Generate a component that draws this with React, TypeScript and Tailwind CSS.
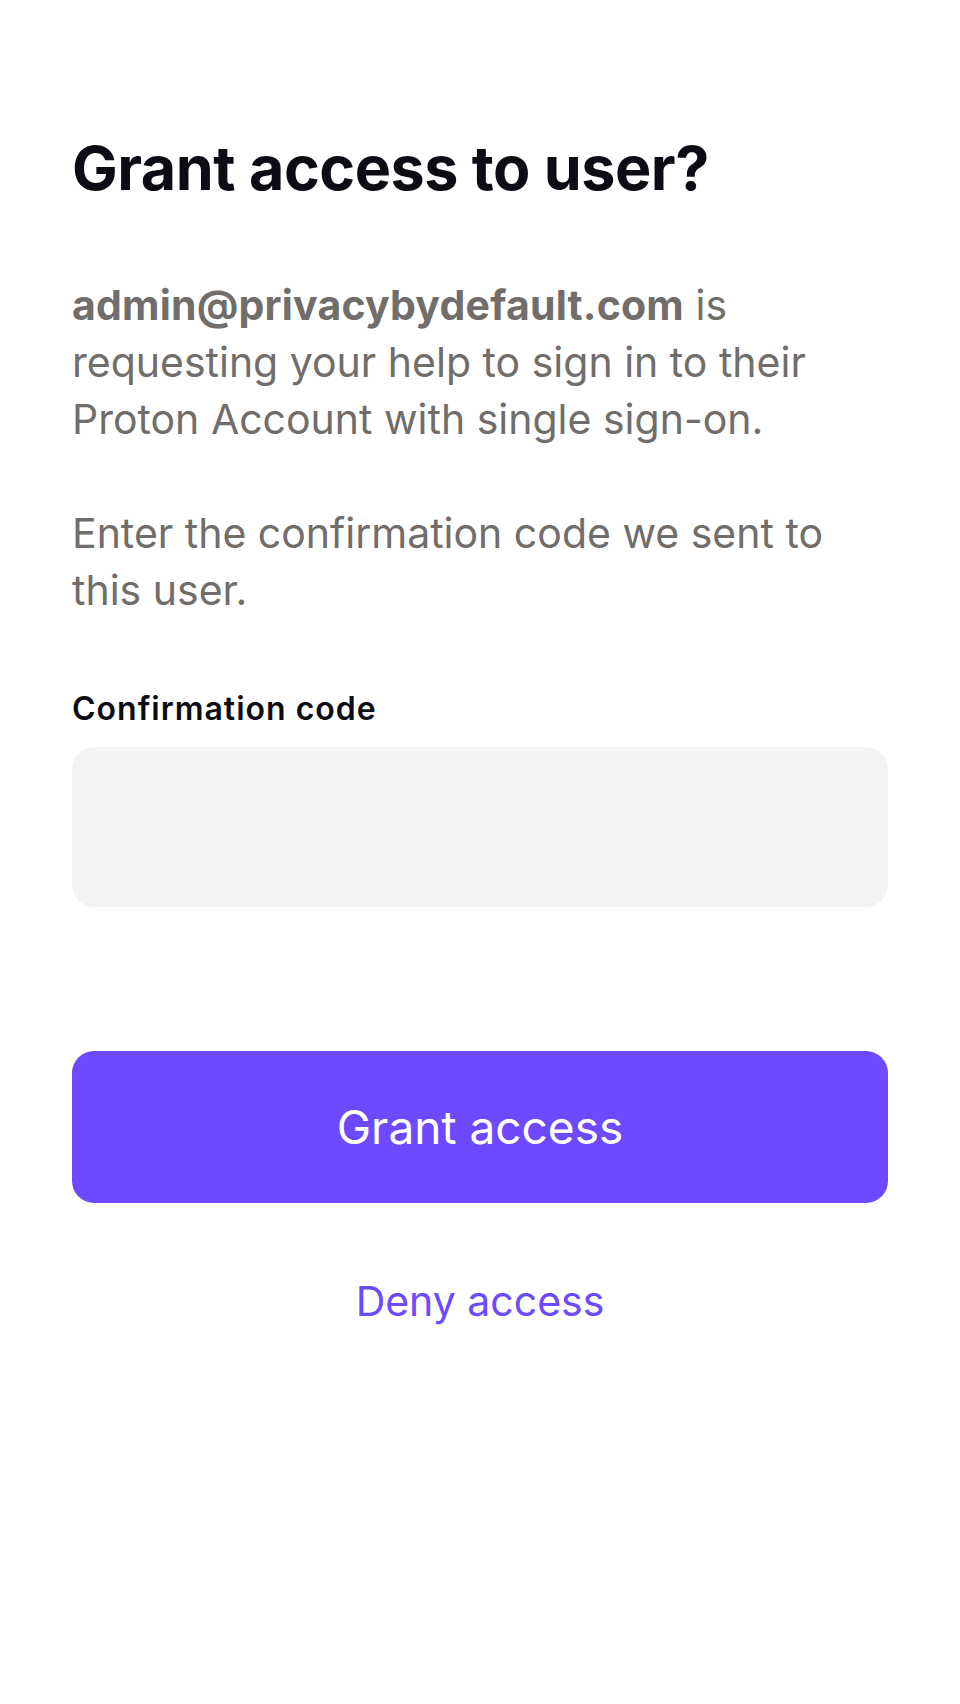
export default function App() {
  return (
    <div
      className="min-h-[1704px] w-[960px] bg-white px-[72px] pt-[128px]"
      style={{ fontFamily: "Inter, 'Noto Sans', sans-serif" }}
    >
      <h1 className="text-[61px] font-bold leading-[80px] tracking-[-0.5px] text-[#0c0c14]">
        Grant access to user?
      </h1>

      <div className="mt-[69px] text-[41px] leading-[57px] text-[#706d6b]">
        <p>
          <span className="font-bold tracking-[0.2px]">admin@privacybydefault.com</span> is requesting your help to sign in to their Proton Account with single sign-on.
        </p>
        <p className="mt-[57px]">Enter the confirmation code we sent to this user.</p>
      </div>

      <label className="mt-[70px] block text-[32px] font-semibold leading-[40px] tracking-[1px] text-[#0c0c14]">
        Confirmation code
      </label>
      <div className="mt-[18px] h-[160px] w-full rounded-[22px] bg-[#f4f3f2]" />

      <button className="mt-[144px] flex h-[152px] w-full items-center justify-center rounded-[22px] bg-[#6d4aff] text-[46px] text-white">
        Grant access
      </button>

      <button className="mt-[60px] flex w-full items-center justify-center text-[41px] leading-[76px] text-[#6d4aff]">
        Deny access
      </button>
    </div>
  );
}
